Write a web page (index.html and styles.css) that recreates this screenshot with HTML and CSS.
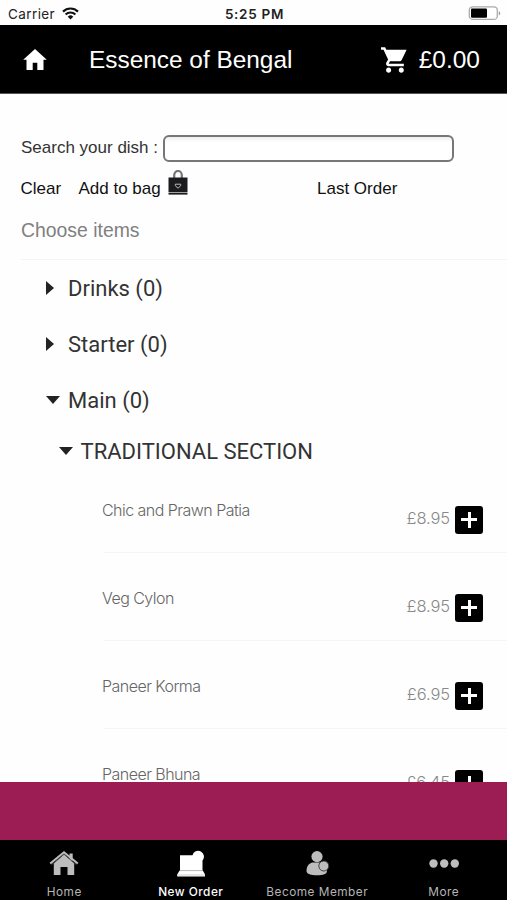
FILE: index.html
```html
<!DOCTYPE html>
<html lang="en">
<head>
    <meta charset="UTF-8">
    <meta name="viewport" content="width=device-width, initial-scale=1.0">
    <title>Essence of Bengal</title>
    <link rel="stylesheet" href="styles.css">
</head>
<body>
    <div class="status-bar">
        <div class="carrier">
            <span>Carrier</span>
            <svg width="17" height="13" viewBox="0 0 17 13" fill="none" stroke="#111">
                <path d="M1 4.6a10.6 10.6 0 0 1 15 0" stroke-width="2.2"/>
                <path d="M3.6 7.5a7 7 0 0 1 9.8 0" stroke-width="2.1"/>
                <path d="M8.5 12.4L5.7 9.7a4 4 0 0 1 5.6 0z" fill="#111" stroke="none"/>
            </svg>
        </div>
        <span class="time">5:25 PM</span>
        <div class="battery">
            <svg width="33" height="15" viewBox="0 0 33 15">
                <rect x="1.3" y="0.8" width="28" height="12.6" rx="3.5" fill="#fff" stroke="#aaa" stroke-width="1.3"/>
                <rect x="3" y="2.5" width="16" height="9.2" rx="1" fill="#000"/>
                <path d="M30.8 5.2v4.2q1.4-.6 1.4-2.1t-1.4-2.1z" fill="#999"/>
            </svg>
        </div>
    </div>

    <header class="header">
        <svg class="home-icon" width="24" height="22" viewBox="0 0 24 22">
            <path d="M12 0L0.2 10.8h3.3V21h6.2v-7.2h4.6V21h6.2V10.800h3.300z" fill="#fff"/>
        </svg>
        <h1>Essence of Bengal</h1>
        <div class="cart">
            <svg width="26" height="26" viewBox="1 2 20.5 20">
                <path d="M7 18c-1.1 0-1.99.9-1.99 2S5.9 22 7 22s2-.9 2-2-.9-2-2-2zM1 2v2h2l3.6 7.59-1.35 2.45c-.16.28-.25.61-.25.96 0 1.1.9 2 2 2h12v-2H7.42c-.14 0-.25-.11-.25-.25l.03-.12.9-1.63h7.45c.75 0 1.41-.41 1.75-1.03L21.2 4H5.21l-.94-2H1zm16 16c-1.1 0-1.99.9-1.99 2s.89 2 1.99 2 2-.9 2-2-.9-2-2-2z" fill="#fff"/>
            </svg>
            <span>£0.00</span>
        </div>
    </header>

    <main class="content">
        <div class="search">
            <label for="dish">Search your dish :</label>
            <input type="text" id="dish">
        </div>
        <div class="actions">
            <span class="clear">Clear</span>
            <span class="add">Add to bag</span>
            <svg class="bag-icon" width="20" height="26" viewBox="0 0 20 26">
                <path d="M6.2 9V5a3.8 4 0 0 1 7.6 0v4" fill="none" stroke="#777" stroke-width="2.2"/>
                <rect x="0.5" y="7.500" width="19" height="14.500" fill="#1c1c1f"/>
                <rect x="0.5" y="22.600" width="19" height="2" fill="#1c1c1f"/>
                <path d="M10 18.2l-2.7-2.500v-1.500h5.400v1.500z" fill="none" stroke="#bbb" stroke-width="1"/>
            </svg>
            <span class="last">Last Order</span>
        </div>
        <div class="choose">Choose items</div>

        <div class="menu">
            <div class="category"><i class="arrow right"></i><span>Drinks (0)</span></div>
            <div class="category"><i class="arrow right"></i><span>Starter (0)</span></div>
            <div class="category"><i class="arrow down"></i><span>Main (0)</span></div>
            <div class="section"><i class="arrow down"></i><span>TRADITIONAL SECTION</span></div>

            <div class="item">
                <span class="name">Chic and Prawn Patia</span>
                <span class="price">£8.95</span>
                <button class="plus"></button>
            </div>
            <div class="item">
                <span class="name">Veg Cylon</span>
                <span class="price">£8.95</span>
                <button class="plus"></button>
            </div>
            <div class="item">
                <span class="name">Paneer Korma</span>
                <span class="price">£6.95</span>
                <button class="plus"></button>
            </div>
            <div class="item">
                <span class="name">Paneer Bhuna</span>
                <span class="price">£6.45</span>
                <button class="plus"></button>
            </div>
        </div>
    </main>

    <div class="banner"></div>

    <nav class="tabs">
        <div class="tab">
            <svg width="30" height="28" viewBox="0 0 30 28">
                <path d="M20.5 3.5h3.2v7h-3.2z" fill="#bdbdbd"/>
                <path d="M4.8 13.5L15 4.6l10.2 8.900V25h-6.700v-8h-7v8H4.800z" fill="#bdbdbd"/>
                <path d="M2.500 14.600L15 4.200l12.500 10.400" fill="none" stroke="#555" stroke-width="0.900"/>
                <path d="M1.200 13.600L15 2.200l13.800 11.400" fill="none" stroke="#bdbdbd" stroke-width="2"/>
            </svg>
            <span>Home</span>
        </div>
        <div class="tab active">
            <svg width="30" height="28" viewBox="0 0 30 28">
                <path d="M4 5.200h12.500a5.800 5.800 0 1 1 10 5.200V20.500H4z" fill="#fff"/>
                <path d="M3.600 20.500h23.200l2.200 4v2.100H1.200v-2.100z" fill="#fff"/>
                <path d="M4 20.600h22.500M1.400 25h27.200" stroke="#bbb" stroke-width="0.700"/>
            </svg>
            <span>New Order</span>
        </div>
        <div class="tab">
            <svg width="30" height="28" viewBox="0 0 30 28">
                <circle cx="15" cy="6.600" r="5.600" fill="#bdbdbd"/>
                <path d="M4.500 21c0-6 3.500-8.600 7-8.600h7c4 0 6.500 4 6.500 8.600 0 3-4 4.300-10 4.300S4.500 24 4.500 21z" fill="#bdbdbd"/>
                <circle cx="21.800" cy="16" r="5" fill="#bdbdbd" stroke="#333" stroke-width="0.900"/>
            </svg>
            <span>Become Member</span>
        </div>
        <div class="tab">
            <svg width="30" height="28" viewBox="0 0 30 28" fill="#bdbdbd">
                <circle cx="4.500" cy="13.500" r="4.200"/>
                <circle cx="15.200" cy="13.500" r="4.200"/>
                <circle cx="25.800" cy="13.500" r="4.200"/>
            </svg>
            <span>More</span>
        </div>
    </nav>
</body>
</html>
```
FILE: styles.css
```css
* {
    box-sizing: border-box;
}

body {
    margin: 0;
    height: 900px;
    display: flex;
    flex-direction: column;
    overflow: hidden;
    background: #fefefe;
    font-family: "Liberation Sans", Arial, sans-serif;
    white-space: nowrap;
}

svg {
    display: block;
    flex: none;
}

.status-bar {
    flex: none;
    height: 25px;
    padding: 2px 6px 0 8px;
    display: grid;
    grid-template-columns: 1fr auto 1fr;
    align-items: center;
    font-family: Inter, sans-serif;
    font-size: 13.5px;
    color: #222;
}

.carrier {
    display: flex;
    align-items: center;
    gap: 7px;
    letter-spacing: 0.4px;
}

.time {
    font-weight: 600;
    letter-spacing: 0.7px;
}

.battery {
    display: flex;
    justify-content: flex-end;
}

.header {
    flex: none;
    height: 69px;
    padding: 2px 27px 0 23px;
    display: flex;
    align-items: center;
    background: #000;
    color: #fff;
    border-bottom: 1px solid #555;
}

.header h1 {
    margin: 0 0 0 42px;
    font-size: 24.4px;
    font-weight: normal;
}

.cart {
    margin-left: auto;
    display: flex;
    align-items: center;
    gap: 12px;
    font-size: 24.5px;
}

.content {
    flex: 1;
    min-height: 0;
    padding-top: 40px;
    overflow: hidden;
}

.search {
    height: 29px;
    padding-left: 21px;
    display: flex;
    align-items: center;
    font-size: 17px;
    color: #333;
}

.search label {
    width: 142px;
    padding-bottom: 2px;
}

.search input {
    width: 291px;
    height: 27px;
    border: 2px solid #777;
    border-radius: 6px;
    background: linear-gradient(#eee, #fff 5px);
}

.actions {
    height: 51px;
    padding-left: 20.5px;
    display: flex;
    align-items: center;
    font-size: 17px;
    color: #111;
}

.clear {
    width: 58px;
}

.add {
    width: 89px;
}

.bag-icon {
    margin-bottom: 12px;
}

.last {
    margin-left: 129.5px;
}

.choose {
    height: 46px;
    margin-left: 21px;
    padding-top: 5px;
    font-size: 19.4px;
    color: #808080;
    border-bottom: 1px solid #f4f4f4;
}

.menu {
    font-family: Roboto, sans-serif;
    font-size: 22px;
    color: #333;
}

.category {
    height: 56px;
    padding-left: 46px;
    display: flex;
    align-items: center;
}

.section {
    height: 37px;
    padding: 9px 0 0 58.5px;
    display: flex;
    align-items: center;
}

.arrow {
    width: 22px;
    display: flex;
}

.arrow::before {
    content: "";
    border: 7px solid transparent;
}

.arrow.right::before {
    border-left: 8px solid #222;
    border-right: 0;
}

.arrow.down::before {
    border-top: 8px solid #222;
    border-bottom: 0;
}

.item {
    height: 88px;
    margin-left: 104px;
    padding-right: 24px;
    display: flex;
    align-items: center;
    border-bottom: 1px solid #f4f4f4;
    font-family: Inter, sans-serif;
    font-weight: 300;
    font-size: 16px;
}

.name {
    margin-left: -2px;
    padding-top: 2px;
    letter-spacing: -0.53px;
    color: #666;
}

.price {
    margin-left: auto;
    padding-top: 18px;
    font-size: 16.5px;
    letter-spacing: -0.1px;
    color: #888;
}

.plus {
    width: 28px;
    height: 28px;
    margin: 22px 0 0 5px;
    padding: 0;
    border: 0;
    border-radius: 3px;
    background:
        linear-gradient(#fff, #fff) center / 16px 3px no-repeat,
        linear-gradient(#fff, #fff) center / 3px 16px no-repeat,
        #000;
}

.banner {
    flex: none;
    height: 58px;
    background: #9b1d53;
}

.tabs {
    flex: none;
    height: 60px;
    padding-left: 1px;
    display: grid;
    grid-template-columns: repeat(4, 1fr);
    background: #000;
}

.tab {
    padding-top: 10px;
    display: flex;
    flex-direction: column;
    align-items: center;
    gap: 7px;
    font-family: Inter, sans-serif;
    font-size: 11.8px;
    line-height: 15px;
    letter-spacing: 0.5px;
    color: #b5b5b5;
}

.tab.active {
    font-weight: 500;
    color: #fff;
}
```
